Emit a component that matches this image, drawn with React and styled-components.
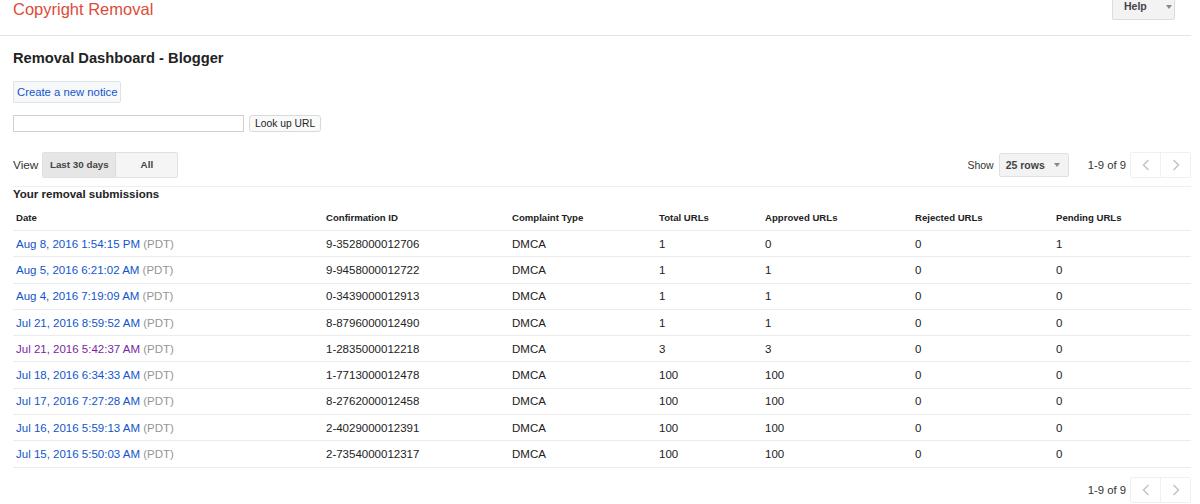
import React from 'react';
import styled, { createGlobalStyle } from 'styled-components';

const GlobalStyle = createGlobalStyle`
  body {
    margin: 0;
    background: #fff;
    font-family: "Liberation Sans", Arial, sans-serif;
    color: #222;
  }
`;

const Page = styled.div`
  width: 1191px;
`;

const Header = styled.div`
  height: 35px;
  border-bottom: 1px solid #e5e5e5;
  display: flex;
  justify-content: space-between;
  align-items: flex-start;
  padding-left: 13px;
`;

const Brand = styled.div`
  color: #dd4b39;
  font-size: 16.5px;
  line-height: 20px;
  margin-top: -1px;
`;

const HelpButton = styled.div`
  margin-right: 16px;
  margin-top: -8px;
  width: 63px;
  height: 28px;
  box-sizing: border-box;
  background: #f3f3f3;
  border: 1px solid #dcdcdc;
  border-radius: 2px;
  display: flex;
  align-items: flex-end;
  padding: 0 0 7px 11px;
  font-size: 10.5px;
  font-weight: bold;
  color: #444;
  gap: 19px;
`;

const Caret = styled.span`
  width: 0;
  height: 0;
  border-left: 3px solid transparent;
  border-right: 3px solid transparent;
  border-top: 4px solid #888;
  margin-bottom: 3px;
`;

const SelectCaret = styled(Caret)`
  margin-bottom: 0;
`;

const Content = styled.div`
  padding: 0 0 0 13px;
`;

const Title = styled.h1`
  margin: 13px 0 0;
  font-size: 14.7px;
  line-height: 18px;
  font-weight: bold;
  color: #222;
`;

const NoticeButton = styled.div`
  display: inline-block;
  margin-top: 14px;
  padding: 0 3px;
  height: 20px;
  line-height: 20px;
  font-size: 11.3px;
  color: #1155cc;
  background: #f7f8fa;
  border: 1px solid #dde3ea;
  border-radius: 2px;
`;

const LookupRow = styled.div`
  display: flex;
  align-items: center;
  gap: 5px;
  margin-top: 12px;
`;

const UrlInput = styled.div`
  width: 229px;
  height: 15px;
  border: 1px solid #d0d0d0;
  background: #fff;
`;

const SmallButton = styled.div`
  height: 15px;
  line-height: 15px;
  padding: 0 5px;
  font-size: 10.3px;
  color: #222;
  border: 1px solid #dadada;
  border-radius: 3px;
  background: #fafafa;
`;

const Toolbar = styled.div`
  display: flex;
  align-items: center;
  justify-content: space-between;
  margin-top: 20px;
  padding-bottom: 8px;
  border-bottom: 1px solid #efefef;
`;

const Group = styled.div`
  display: flex;
  align-items: center;
`;

const Label = styled.span`
  font-size: ${p => p.$size || 12}px;
  color: #333;
  margin-right: ${p => p.$gap || 4}px;
`;

const Segmented = styled.div`
  display: flex;
  border: 1px solid #e0e0e0;
  border-radius: 2px;
  overflow: hidden;
`;

const Segment = styled.div`
  width: ${p => p.$w}px;
  height: 24px;
  line-height: 24px;
  text-align: center;
  font-size: 9.8px;
  font-weight: bold;
  color: #444;
  background: ${p => (p.$active ? '#e6e6e6' : '#f5f5f5')};
  & + & {
    border-left: 1px solid #dcdcdc;
  }
`;

const Select = styled.div`
  width: 70px;
  height: 24px;
  box-sizing: border-box;
  border: 1px solid #e0e0e0;
  border-radius: 2px;
  background: #f3f3f3;
  display: flex;
  align-items: center;
  justify-content: space-between;
  padding: 0 8px 0 6px;
  font-size: 10.5px;
  font-weight: bold;
  color: #444;
  margin-right: 19px;
`;

const PageInfo = styled.span`
  font-size: 11.3px;
  color: #333;
  margin-right: 4px;
`;

const Pager = styled.div`
  display: flex;
  border: 1px solid #f0f0f0;
  border-radius: 2px;
`;

const PagerButton = styled.div`
  width: 29px;
  height: 24px;
  display: flex;
  align-items: center;
  justify-content: center;
  background: #fff;
  & + & {
    border-left: 1px solid #f0f0f0;
  }
`;

const SectionTitle = styled.div`
  font-size: 11.5px;
  font-weight: bold;
  color: #222;
  margin-top: 1px;
`;

const Table = styled.table`
  border-collapse: collapse;
  width: 1178px;
  margin-top: 5px;
  table-layout: fixed;
`;

const Th = styled.th`
  text-align: left;
  font-size: 9.6px;
  font-weight: bold;
  color: #222;
  padding: 0 3px;
  height: 25px;
  border-bottom: 1px solid #ebebeb;
`;

const Td = styled.td`
  font-size: 11.5px;
  color: #222;
  padding: 0 3px;
  height: 25.3px;
  border-bottom: 1px solid #ebebeb;
  white-space: nowrap;
`;

const DateLink = styled.span`
  color: ${p => (p.$visited ? '#7b1fa2' : '#1155cc')};
`;

const Zone = styled.span`
  color: #959595;
`;

const Footer = styled.div`
  display: flex;
  justify-content: flex-end;
  align-items: center;
  margin-top: 9px;
`;

const Chevron = ({ dir }) => (
  <svg width="8" height="12" viewBox="0 0 8 12">
    <path
      d={dir === 'left' ? 'M6.5 1 L1.5 6 L6.5 11' : 'M1.5 1 L6.5 6 L1.5 11'}
      fill="none"
      stroke="#c4c4c4"
      strokeWidth="1.5"
    />
  </svg>
);

const rows = [
  { date: 'Aug 8, 2016 1:54:15 PM', id: '9-3528000012706', total: 1, approved: 0, rejected: 0, pending: 1 },
  { date: 'Aug 5, 2016 6:21:02 AM', id: '9-9458000012722', total: 1, approved: 1, rejected: 0, pending: 0 },
  { date: 'Aug 4, 2016 7:19:09 AM', id: '0-3439000012913', total: 1, approved: 1, rejected: 0, pending: 0 },
  { date: 'Jul 21, 2016 8:59:52 AM', id: '8-8796000012490', total: 1, approved: 1, rejected: 0, pending: 0 },
  { date: 'Jul 21, 2016 5:42:37 AM', id: '1-2835000012218', total: 3, approved: 3, rejected: 0, pending: 0, visited: true },
  { date: 'Jul 18, 2016 6:34:33 AM', id: '1-7713000012478', total: 100, approved: 100, rejected: 0, pending: 0 },
  { date: 'Jul 17, 2016 7:27:28 AM', id: '8-2762000012458', total: 100, approved: 100, rejected: 0, pending: 0 },
  { date: 'Jul 16, 2016 5:59:13 AM', id: '2-4029000012391', total: 100, approved: 100, rejected: 0, pending: 0 },
  { date: 'Jul 15, 2016 5:50:03 AM', id: '2-7354000012317', total: 100, approved: 100, rejected: 0, pending: 0 },
];

const columns = [
  { label: 'Date', width: 310 },
  { label: 'Confirmation ID', width: 186 },
  { label: 'Complaint Type', width: 147 },
  { label: 'Total URLs', width: 106 },
  { label: 'Approved URLs', width: 150 },
  { label: 'Rejected URLs', width: 141 },
  { label: 'Pending URLs', width: 138 },
];

const Pagination = () => (
  <Group>
    <PageInfo>1-9 of 9</PageInfo>
    <Pager>
      <PagerButton><Chevron dir="left" /></PagerButton>
      <PagerButton><Chevron dir="right" /></PagerButton>
    </Pager>
  </Group>
);

const App = () => (
  <Page>
    <GlobalStyle />
    <Header>
      <Brand>Copyright Removal</Brand>
      <HelpButton>Help <Caret /></HelpButton>
    </Header>
    <Content>
      <Title>Removal Dashboard - Blogger</Title>
      <NoticeButton>Create a new notice</NoticeButton>
      <LookupRow>
        <UrlInput />
        <SmallButton>Look up URL</SmallButton>
      </LookupRow>
      <Toolbar>
        <Group>
          <Label $gap={4} $size={11.8}>View</Label>
          <Segmented>
            <Segment $w={72} $active>Last 30 days</Segment>
            <Segment $w={61}>All</Segment>
          </Segmented>
        </Group>
        <Group>
          <Label $gap={5} $size={10.5}>Show</Label>
          <Select>25 rows <SelectCaret /></Select>
          <Pagination />
        </Group>
      </Toolbar>
      <SectionTitle>Your removal submissions</SectionTitle>
      <Table>
        <colgroup>
          {columns.map(c => <col key={c.label} style={{ width: c.width }} />)}
        </colgroup>
        <thead>
          <tr>
            {columns.map(c => <Th key={c.label}>{c.label}</Th>)}
          </tr>
        </thead>
        <tbody>
          {rows.map(r => (
            <tr key={r.id}>
              <Td>
                <DateLink $visited={r.visited}>{r.date}</DateLink> <Zone>(PDT)</Zone>
              </Td>
              <Td>{r.id}</Td>
              <Td>DMCA</Td>
              <Td>{r.total}</Td>
              <Td>{r.approved}</Td>
              <Td>{r.rejected}</Td>
              <Td>{r.pending}</Td>
            </tr>
          ))}
        </tbody>
      </Table>
      <Footer>
        <Pagination />
      </Footer>
    </Content>
  </Page>
);

export default App;
